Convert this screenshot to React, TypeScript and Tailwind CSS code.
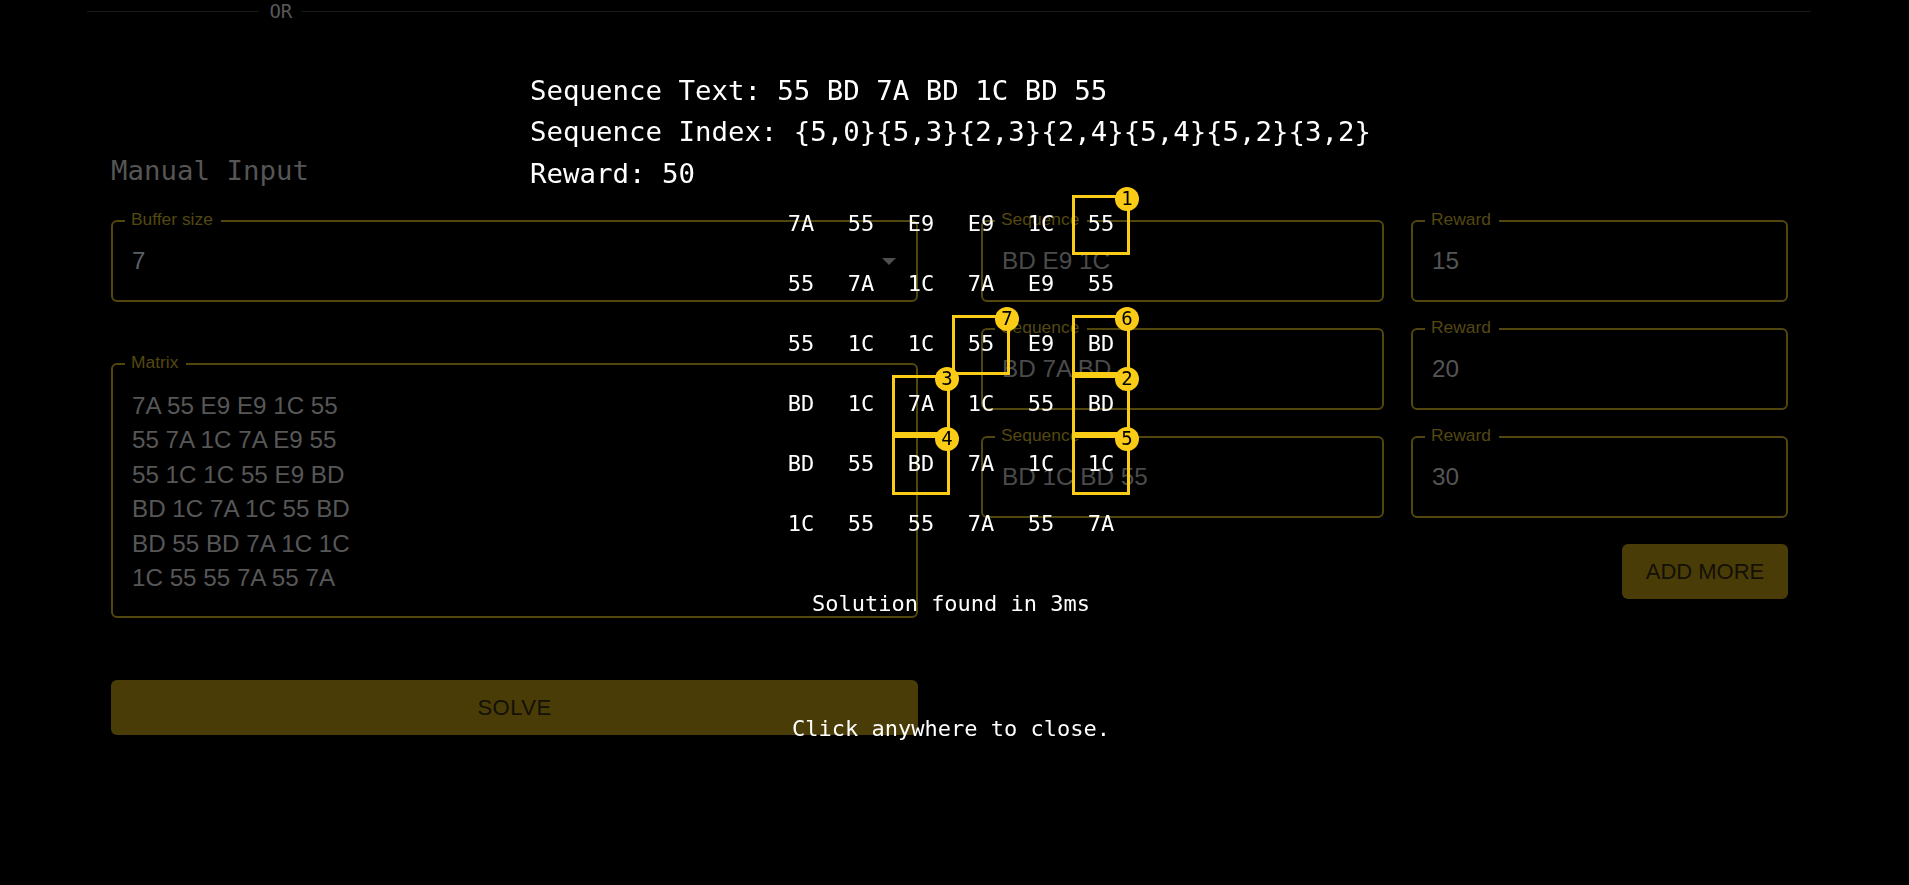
import React from 'react';

const MONO = { fontFamily: '"DejaVu Sans Mono", "Liberation Mono", monospace' };
const SANS = { fontFamily: '"Liberation Sans", Arial, sans-serif' };

const MATRIX = [
  ['7A', '55', 'E9', 'E9', '1C', '55'],
  ['55', '7A', '1C', '7A', 'E9', '55'],
  ['55', '1C', '1C', '55', 'E9', 'BD'],
  ['BD', '1C', '7A', '1C', '55', 'BD'],
  ['BD', '55', 'BD', '7A', '1C', '1C'],
  ['1C', '55', '55', '7A', '55', '7A'],
];

// {col,row} of every step in the found sequence
const PATH: [number, number][] = [
  [5, 0],
  [5, 3],
  [2, 3],
  [2, 4],
  [5, 4],
  [5, 2],
  [3, 2],
];

const SEQUENCES = [
  { seq: 'BD E9 1C', reward: '15' },
  { seq: 'BD 7A BD', reward: '20' },
  { seq: 'BD 1C BD 55', reward: '30' },
];

const Field: React.FC<{ label: string; className?: string; children: React.ReactNode }> = ({
  label,
  className = '',
  children,
}) => (
  <div className={`relative border-2 border-[#52460f] rounded-[6px] ${className}`}>
    <span
      className="absolute -top-[11px] left-[12px] pl-[6px] pr-[8px] bg-black text-[17.4px] leading-none text-[#544811]"
      style={SANS}>
      {label}
    </span>
    {children}
  </div>
);

const SolutionOverlay: React.FC = () => (
  <div className="fixed inset-0 flex flex-col items-center pt-[70px] pr-[7px] text-white" style={MONO}>
    <div className="w-[842px] text-[27.4px] leading-[41.3px]">
      <p>Sequence Text: 55 BD 7A BD 1C BD 55</p>
      <p>Sequence Index: {'{5,0}{5,3}{2,3}{2,4}{5,4}{5,2}{3,2}'}</p>
      <p>Reward: 50</p>
    </div>

    <div className="relative w-[360px] h-[360px] grid grid-cols-6">
      {MATRIX.flat().map((v, i) => (
        <div key={i} className="h-[60px] flex items-center justify-center text-[22px]">
          {v}
        </div>
      ))}
      {PATH.map(([c, r], i) => (
        <div
          key={`box-${i}`}
          className="absolute w-[58px] h-[60px] border-[3px] border-[#facc15]"
          style={{ left: c * 60 + 1, top: r * 60 + 1 }}
        />
      ))}
      {PATH.map(([c, r], i) => (
        <div
          key={`badge-${i}`}
          className="absolute w-[24px] h-[24px] rounded-full bg-[#facc15] text-black text-[19px] leading-none flex items-center justify-center"
          style={{ left: c * 60 + 44, top: r * 60 - 7 }}>
          {i + 1}
        </div>
      ))}
    </div>

    <p className="mt-[33px] text-[22px] leading-[33px]">Solution found in 3ms</p>
    <p className="mt-[92px] text-[22px] leading-[33px]">Click anywhere to close.</p>
  </div>
);

export default function App() {
  return (
    <div className="relative min-h-screen bg-black overflow-hidden">
      {/* OR divider (page scrolled, only its lower part is visible) */}
      <div className="flex items-center h-[20px] pt-[2px] pl-[87px] pr-[98px]">
        <div className="w-[10%] h-px bg-[#1a1a1a]" />
        <span className="px-[10px] text-[19px] leading-none text-[#575757]" style={MONO}>
          OR
        </span>
        <div className="flex-1 h-px bg-[#1a1a1a]" />
      </div>

      <div className="pl-[111px]">
        <h2 className="mt-[135px] text-[27.4px] leading-[32px] text-[#555555]" style={MONO}>
          Manual Input
        </h2>

        <div className="mt-[33px] flex gap-[63px]">
          {/* left column */}
          <div className="w-[807px] flex flex-col">
            <Field label="Buffer size" className="h-[82px] flex items-center justify-between pl-[19px] pr-[20px]">
              <span className="text-[24px] text-[#5a6169]" style={SANS}>
                7
              </span>
              <svg width="14" height="7" viewBox="0 0 14 7">
                <path d="M0 0h14L7 7z" fill="#4f4f4f" />
              </svg>
            </Field>

            <Field label="Matrix" className="mt-[61px] h-[255px] pt-[24px] pl-[19px]">
              <div className="text-[24.2px] leading-[34.4px] text-[#575757]" style={SANS}>
                {MATRIX.map((row, i) => (
                  <div key={i}>{row.join(' ')}</div>
                ))}
              </div>
            </Field>

            <button
              className="mt-[62px] h-[55px] rounded-[6px] bg-[#4a3c06] text-[22px] text-[#131006] tracking-[0.5px]"
              style={SANS}>
              SOLVE
            </button>
          </div>

          {/* right column */}
          <div className="w-[807px] flex flex-col">
            <div className="flex flex-col gap-[26px]">
              {SEQUENCES.map((s, i) => (
                <div key={i} className="flex gap-[27px]">
                  <Field label="Sequence" className="w-[403px] h-[82px] flex items-center pl-[19px]">
                    <span className="text-[24.3px] text-[#4b4b4b]" style={SANS}>
                      {s.seq}
                    </span>
                  </Field>
                  <Field label="Reward" className="w-[377px] h-[82px] flex items-center pl-[19px]">
                    <span className="text-[24.3px] text-[#555555]" style={SANS}>
                      {s.reward}
                    </span>
                  </Field>
                </div>
              ))}
            </div>
            <button
              className="mt-[26px] self-end w-[166px] h-[55px] rounded-[6px] bg-[#4a3c06] text-[22px] text-[#131006]"
              style={SANS}>
              ADD MORE
            </button>
          </div>
        </div>
      </div>

      <SolutionOverlay />
    </div>
  );
}
